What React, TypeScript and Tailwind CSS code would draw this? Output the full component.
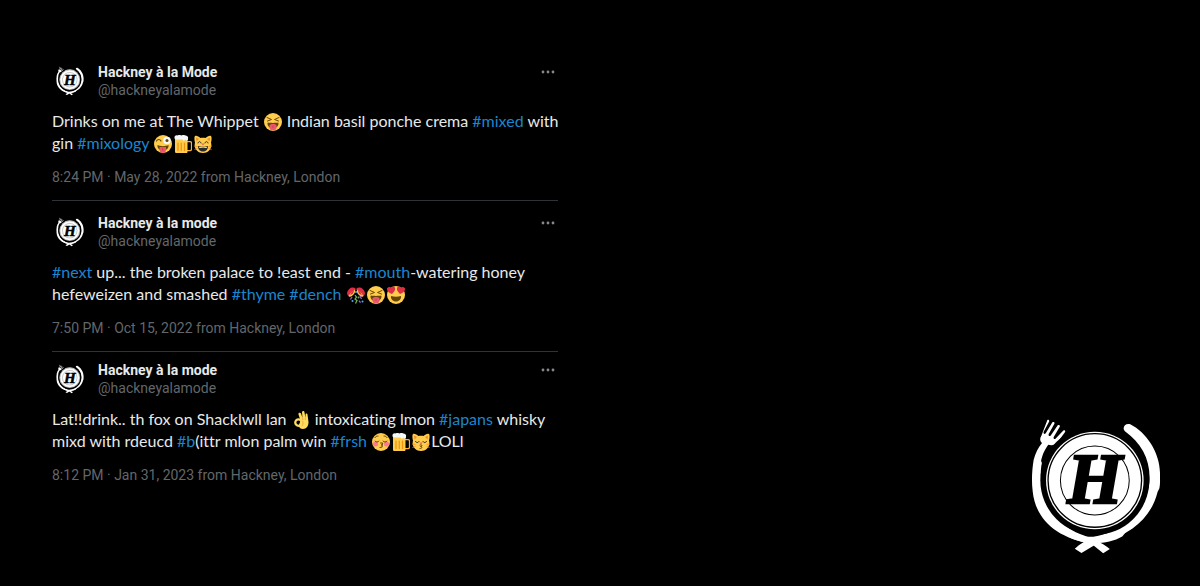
import type { ReactNode } from "react";

interface Post {
  name: string;
  time: string;
  lines: ReactNode[];
}

function Tag({ children }: { children: string }) {
  return (
    <a href="#tag" className="text-[#1a86d0] hover:underline">
      {children}
    </a>
  );
}

function Emoji({ label, children }: { label: string; children: ReactNode }) {
  return (
    <svg viewBox="0 0 36 36" role="img" aria-label={label} className="mx-px inline-block size-[18px] align-[-4px]">
      {children}
    </svg>
  );
}

function Face() {
  return <circle cx="18" cy="18" r="18" fill="#FFCC4D" />;
}

function SquintTongue() {
  return (
    <Emoji label="Squinting face with tongue">
      <Face />
      <path d="M8 19c3 1 17 1 20 0 2 0 1 8-4 10H12C7 27 6 19 8 19z" fill="#664500" />
      <path d="M11 24c3-3 11-3 14 0v5c0 8-14 8-14 0z" fill="#E8596E" />
      <path d="M18 25v5" stroke="#DD2E44" strokeWidth="1.5" />
      <path d="M6 9l9 4-8 3M30 9l-9 4 8 3" fill="none" stroke="#664500" strokeWidth="2" strokeLinecap="round" strokeLinejoin="round" />
    </Emoji>
  );
}

function WinkTongue() {
  return (
    <Emoji label="Winking face with tongue">
      <Face />
      <path d="M7 20c5 3 17 3 22 0 1 6-4 11-11 11S6 26 7 20z" fill="#664500" />
      <path d="M11 24h13v6c0 8-13 8-13 0z" fill="#E8596E" />
      <path d="M17.5 25v6" stroke="#DD2E44" strokeWidth="1.5" />
      <path d="M5 12c2-4 7-4 9 0" fill="none" stroke="#664500" strokeWidth="2.4" strokeLinecap="round" />
      <circle cx="26" cy="11" r="7.5" fill="#F5F8FA" />
      <circle cx="26" cy="11" r="3" fill="#664500" />
    </Emoji>
  );
}

function Beer() {
  return (
    <Emoji label="Beer mug">
      <path d="M26 13h6c2 0 3 1 3 3v12c0 2-1 3-3 3h-6" fill="none" stroke="#FFAC33" strokeWidth="2.5" />
      <path d="M2 8h25v25c0 2-1 3-3 3H5c-2 0-3-1-3-3z" fill="#FFCC4D" />
      <path d="M8 16v15M14.5 16v15M21 16v15" stroke="#F4900C" strokeWidth="2.5" strokeLinecap="round" />
      <path d="M1 5c0-3 3-5 6-4 3-2 6-1 8 0 3-2 6-1 8 0 4 0 6 3 5 6v2c-1 3-4 3-5 0-2 3-5 3-6 0H5c-3 0-4-1-4-4z" fill="#F5F8FA" />
    </Emoji>
  );
}

function CatHead() {
  return (
    <>
      <path d="M2 2c2-2 8 1 11 4 3-1 7-1 10 0 3-3 9-6 11-4s1 10 0 13c3 12-5 21-16 21S-1 27 2 15C1 12 0 4 2 2z" fill="#FFCC4D" />
      <path d="M4 5l6 3-5 5zM32 5l-6 3 5 5z" fill="#F18F26" />
      <path d="M0 22l7 1M1 29l6-2M36 22l-7 1M35 29l-6-2" stroke="#F39120" strokeWidth="1.5" />
    </>
  );
}

function GrinningCat() {
  return (
    <Emoji label="Grinning cat with smiling eyes">
      <CatHead />
      <path d="M8 22c4 2 16 2 20 0 0 6-3 11-10 11S8 28 8 22z" fill="#272B2B" />
      <path d="M10 24c4 1 12 1 16 0l-1 2H11z" fill="#fff" />
      <path d="M8 16c1-4 5-4 6 0M22 16c1-4 5-4 6 0" fill="none" stroke="#272B2B" strokeWidth="2" strokeLinecap="round" />
      <path d="M15 17h6l-3 4z" fill="#E75A70" />
    </Emoji>
  );
}

function KissingCat() {
  return (
    <Emoji label="Kissing cat">
      <CatHead />
      <path d="M7 17c2 3 5 3 7 0M22 17c2 3 5 3 7 0" fill="none" stroke="#272B2B" strokeWidth="2" strokeLinecap="round" />
      <path d="M15 19h6l-3 4z" fill="#E75A70" />
      <path d="M16 24c6-1 5 3 1 3 4 0 4 4-1 4" fill="none" stroke="#664500" strokeWidth="2" strokeLinecap="round" />
    </Emoji>
  );
}

function Confetti() {
  return (
    <Emoji label="Confetti ball">
      <path d="M17 5C12 0 2 4 0 14c0 3 2 6 5 7L17 8z" fill="#DD2E44" />
      <path d="M19 5c5-5 15-1 17 9 0 3-2 6-5 7L19 8z" fill="#DD2E44" />
      <path d="M16 7l-7 5-6 8c1 2 5 2 8-1 4-3 6-7 5-12zM20 7l7 5 6 8c-1 2-5 2-8-1-4-3-6-7-5-12z" fill="#FFCC4D" />
      <path d="M15 7l-6 5-3 7 6-4zM21 7l6 5 3 7-6-4z" fill="#DD2E44" />
      <path d="M16 18l3 4-3 4 4 3-3 6" fill="none" stroke="#77B255" strokeWidth="2.5" />
      <path d="M10 22l-3 5M26 20l3 6M24 29l3 4" stroke="#9266CC" strokeWidth="2.5" />
      <circle cx="18" cy="12" r="2" fill="#55ACEE" />
      <circle cx="11" cy="30" r="2" fill="#55ACEE" />
      <circle cx="23" cy="23" r="2" fill="#77B255" />
      <circle cx="31" cy="31" r="2" fill="#55ACEE" />
    </Emoji>
  );
}

function HeartEyes() {
  return (
    <Emoji label="Smiling face with heart eyes">
      <Face />
      <path d="M8 20c6 2 14 2 20 0 1 6-4 11-10 11S7 26 8 20z" fill="#664500" />
      <path d="M16 4c-1-4-6-4-7 0C7 1 2 1 0 5c-1 5 4 9 10 11 5-4 7-9 6-12z" fill="#DD2E44" />
      <path d="M20 4c1-4 6-4 7 0 2-3 7-3 9 1 1 5-4 9-10 11-5-4-7-9-6-12z" fill="#DD2E44" />
    </Emoji>
  );
}

function KissFace() {
  return (
    <Emoji label="Kissing face with closed eyes">
      <Face />
      <circle cx="7" cy="22" r="5" fill="#FF7892" />
      <circle cx="29" cy="22" r="5" fill="#FF7892" />
      <path d="M6 16c2 3 6 3 8 0M22 16c2 3 6 3 8 0M6 9c1-2 4-3 6-3M30 9c-1-2-4-3-6-3" fill="none" stroke="#664500" strokeWidth="2" strokeLinecap="round" />
      <path d="M17 20c6-1 5 4 1 4 4 0 4 5-2 5" fill="none" stroke="#664500" strokeWidth="2.2" strokeLinecap="round" />
    </Emoji>
  );
}

function OkHand() {
  return (
    <Emoji label="OK hand">
      <path d="M17 19L13 7c-1-4 3-5 5-2l3 9-1-11c0-4 5-4 5 0l2 11V7c0-3 4-3 4 0l2 15c0 8-4 14-11 14-6 0-9-4-8-8z" fill="#FFDC5D" />
      <circle cx="13" cy="23" r="6.5" fill="none" stroke="#FFDC5D" strokeWidth="4.5" />
      <path d="M20 19c3 3 3 7 0 11M21 14l1 4M26 14l1 4" fill="none" stroke="#EF9645" strokeWidth="1.5" />
    </Emoji>
  );
}

function Logo({ className }: { className: string }) {
  return (
    <svg viewBox="30 25 395 410" role="img" aria-label="Hackney à la Mode" className={className}>
      {/* fork */}
      <path
        d="M82 31c3-2 7 1 5 5L71 66c-2 5 2 9 6 5l20-33c3-3 8 0 6 4L86 73c-2 5 3 8 6 4l21-30c3-3 8 0 6 4l-18 31c-2 5 3 8 6 4l22-23c4-3 8 0 6 4l-22 30c-7 9-18 11-28 8-8 10-18 27-22 49 3 4 3 8 1 13-12 84 32 164 103 200 34 14 64 24 93 43l9 7-20 13-37-30C111 385 46 328 38 244c-4-30-2-64 3-94 5-20 14-37 25-50-7-7-7-14-2-22z"
        fill="#fff"
      />
      {/* knife */}
      <path
        d="M314 65c-10-11 1-26 16-21 48 24 88 84 89 145 0 18 1 36-2 47l-5 10c-18 75-78 126-154 145l-24 8-50 30-20-13c15-14 35-25 56-35 88-16 166-82 168-176 0-62-27-105-74-140z"
        fill="#fff"
      />
      {/* rim where the two handles cross */}
      <path d="M112 348c62 44 160 44 224-4l-30 36c-45 26-115 26-158 2z" fill="#fff" />
      {/* plate */}
      <circle cx="224" cy="212" r="163" fill="#000" />
      <circle cx="224" cy="212" r="146" fill="#fff" />
      <circle cx="224" cy="212" r="140" fill="none" stroke="#000" strokeWidth="4" />
      <circle cx="224" cy="212" r="103" fill="none" stroke="#000" strokeWidth="3" />
      <text x="224" y="280" textAnchor="middle" fontSize="212" fontWeight="700" fontStyle="italic" fontFamily="'Liberation Serif', serif" stroke="#000" strokeWidth="7">
        H
      </text>
    </svg>
  );
}

const posts: Post[] = [
  {
    name: "Hackney à la Mode",
    time: "8:24 PM · May 28, 2022 from Hackney, London",
    lines: [
      <>Drinks on me at The Whippet <SquintTongue /> Indian basil ponche crema <Tag>#mixed</Tag> with</>,
      <>gin <Tag>#mixology</Tag> <WinkTongue /><Beer /><GrinningCat /></>,
    ],
  },
  {
    name: "Hackney à la mode",
    time: "7:50 PM · Oct 15, 2022 from Hackney, London",
    lines: [
      <><Tag>#next</Tag> up... the broken palace to !east end - <Tag>#mouth</Tag>-watering honey</>,
      <>hefeweizen and smashed <Tag>#thyme</Tag> <Tag>#dench</Tag> <Confetti /><SquintTongue /><HeartEyes /></>,
    ],
  },
  {
    name: "Hackney à la mode",
    time: "8:12 PM · Jan 31, 2023 from Hackney, London",
    lines: [
      <>Lat!!drink.. th fox on Shacklwll lan <OkHand /> intoxicating lmon <Tag>#japans</Tag> whisky</>,
      <>mixd with rdeucd <Tag>#b</Tag>(ittr mlon palm win <Tag>#frsh</Tag> <KissFace /><Beer /><KissingCat />LOLl</>,
    ],
  },
];

function PostItem({ post }: { post: Post }) {
  return (
    <article className="border-b border-[#2f3336] py-[13px] first:pt-0 last:border-b-0 last:pt-[9px]">
      <header className="flex items-start">
        <div className="mr-2.5 flex size-9 shrink-0 items-center justify-center">
          <Logo className="h-[30px] w-7" />
        </div>
        <div className="flex-1 text-[14px] leading-[18px]">
          <h2 className="font-bold text-[#e7e9ea]">{post.name}</h2>
          <p className="text-[#62676b]">@hackneyalamode</p>
        </div>
        <button type="button" aria-label="More" className="mr-0.5 flex h-[18px] w-4 items-center justify-center text-[#85898d]">
          <svg viewBox="0 0 14 4" className="h-1 w-3.5" fill="currentColor">
            <circle cx="2" cy="2" r="1.4" />
            <circle cx="7" cy="2" r="1.4" />
            <circle cx="12" cy="2" r="1.4" />
          </svg>
        </button>
      </header>
      <p className="mt-[11px] font-['Lato',sans-serif] text-[16px] leading-[22px] text-[#e7e9ea] [font-variant-ligatures:none] sm:whitespace-nowrap">
        {post.lines.map((line, i) => (
          <span key={i} className="block">{line}</span>
        ))}
      </p>
      <p className="mt-[13px] text-[14px] leading-5 text-[#62676b]">{post.time}</p>
    </article>
  );
}

export default function App() {
  return (
    <main className="flex min-h-screen flex-wrap justify-between gap-8 bg-black pt-[63px] pr-[38px] pb-[31px] pl-[52px] font-['Roboto',sans-serif]">
      <section className="w-full max-w-[506px]">
        {posts.map((post) => (
          <PostItem key={post.time} post={post} />
        ))}
      </section>
      <Logo className="h-[137px] w-[132px] self-end" />
    </main>
  );
}
